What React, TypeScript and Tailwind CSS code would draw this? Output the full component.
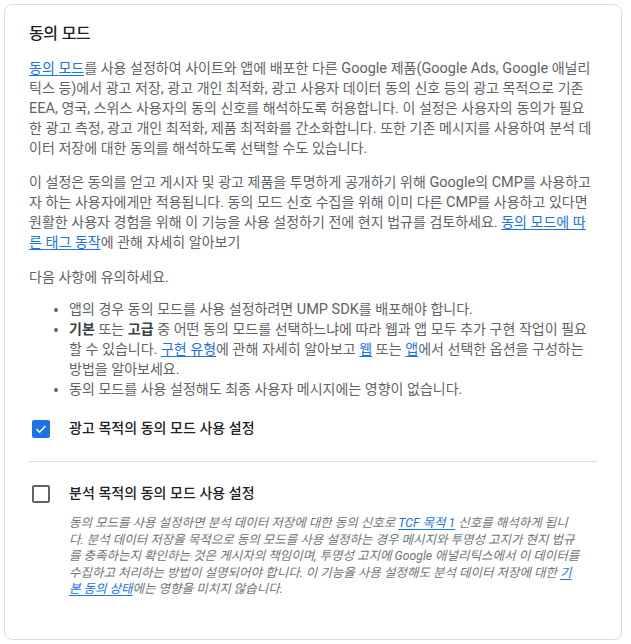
import React from "react";

const KB = "text-[14px] leading-none";
const KT = "text-[16px] tracking-[-0.5px] leading-none";
const KI = "text-[12.5px] leading-none";

function K({ t, k }: { t: string; k: string }) {
  const parts = t.split(/([\u1100-\u11FF\u3130-\u318F\uAC00-\uD7AF]+)/);
  return (
    <>
      {parts.map((p, i) =>
        i % 2 === 1 ? (
          <span key={i} className={k}>
            {p}
          </span>
        ) : (
          <React.Fragment key={i}>{p}</React.Fragment>
        )
      )}
    </>
  );
}

function A({ t, k }: { t: string; k: string }) {
  return (
    <a href="#" className="text-[#1a73e8] underline underline-offset-2">
      <K t={t} k={k} />
    </a>
  );
}

function CheckOn() {
  return (
    <span className="flex h-[18px] w-[18px] shrink-0 items-center justify-center rounded-[2px] bg-[#1a73e8]">
      <svg width="14" height="14" viewBox="0 0 24 24" fill="none">
        <path d="M4.5 12.5l5 5L19.5 7" stroke="white" strokeWidth="2.6" />
      </svg>
    </span>
  );
}

function CheckOff() {
  return <span className="block h-[18px] w-[18px] shrink-0 rounded-[2px] border-2 border-[#5f6368] bg-white" />;
}

export default function App() {
  return (
    <div className="bg-white min-h-[644px] pt-1 pl-1 font-['Roboto','Noto_Sans_CJK_KR',sans-serif]">
      <div className="h-[636px] w-[618px] rounded-lg border border-[#dadce0] bg-white px-6 pt-[16px]">
        <h2 className="mb-[14px] text-[17px] leading-6 font-medium text-[#202124]">
          <K t="동의 모드" k={KT} />
        </h2>
        <div className="text-[14.5px] leading-[20px] text-[#5f6368]">
          <p className="mb-[14px]">
            <A t="동의 모드" k={KB} />
            <K
              t="를 사용 설정하여 사이트와 앱에 배포한 다른 Google 제품(Google Ads, Google 애널리틱스 등)에서 광고 저장, 광고 개인 최적화, 광고 사용자 데이터 동의 신호 등의 광고 목적으로 기존 EEA, 영국, 스위스 사용자의 동의 신호를 해석하도록 허용합니다. 이 설정은 사용자의 동의가 필요한 광고 측정, 광고 개인 최적화, 제품 최적화를 간소화합니다. 또한 기존 메시지를 사용하여 분석 데이터 저장에 대한 동의를 해석하도록 선택할 수도 있습니다."
              k={KB}
            />
          </p>
          <p className="mb-[15px]">
            <K
              t="이 설정은 동의를 얻고 게시자 및 광고 제품을 투명하게 공개하기 위해 Google의 CMP를 사용하고자 하는 사용자에게만 적용됩니다. 동의 모드 신호 수집을 위해 이미 다른 CMP를 사용하고 있다면 원활한 사용자 경험을 위해 이 기능을 사용 설정하기 전에 현지 법규를 검토하세요. "
              k={KB}
            />
            <A t="동의 모드에 따른 태그 동작" k={KB} />
            <K t="에 관해 자세히 알아보기" k={KB} />
          </p>
          <p className="mb-[12px]">
            <K t="다음 사항에 유의하세요." k={KB} />
          </p>
          <ul className="list-disc pl-10">
            <li>
              <K t="앱의 경우 동의 모드를 사용 설정하려면 UMP SDK를 배포해야 합니다." k={KB} />
            </li>
            <li>
              <b className="font-bold text-[#3c4043]">
                <K t="기본" k={KB} />
              </b>
              <K t=" 또는 " k={KB} />
              <b className="font-bold text-[#3c4043]">
                <K t="고급" k={KB} />
              </b>
              <K
                t=" 중 어떤 동의 모드를 선택하느냐에 따라 웹과 앱 모두 추가 구현 작업이 필요할 수 있습니다. "
                k={KB}
              />
              <A t="구현 유형" k={KB} />
              <K t="에 관해 자세히 알아보고 " k={KB} />
              <A t="웹" k={KB} />
              <K t=" 또는 " k={KB} />
              <A t="앱" k={KB} />
              <K t="에서 선택한 옵션을 구성하는 방법을 알아보세요." k={KB} />
            </li>
            <li>
              <K t="동의 모드를 사용 설정해도 최종 사용자 메시지에는 영향이 없습니다." k={KB} />
            </li>
          </ul>

          <div className="mt-[19px] flex h-5 items-center gap-[19px] pl-[3px]">
            <CheckOn />
            <span className="font-medium text-[#202124]">
              <K t="광고 목적의 동의 모드 사용 설정" k={KB} />
            </span>
          </div>

          <div className="mt-[22px] h-px bg-[#dadce0]" />

          <div className="mt-[22px] flex h-5 items-center gap-[19px] pl-[3px]">
            <CheckOff />
            <span className="font-medium text-[#202124]">
              <K t="분석 목적의 동의 모드 사용 설정" k={KB} />
            </span>
          </div>

          <p className="mt-[11px] pl-10 pr-4 text-[12.25px] leading-[16.5px] italic text-[#70757a]">
            <K
              t="동의 모드를 사용 설정하면 분석 데이터 저장에 대한 동의 신호로 "
              k={KI}
            />
            <A t="TCF 목적 1" k={KI} />
            <K
              t=" 신호를 해석하게 됩니다. 분석 데이터 저장을 목적으로 동의 모드를 사용 설정하는 경우 메시지와 투명성 고지가 현지 법규를 충족하는지 확인하는 것은 게시자의 책임이며, 투명성 고지에 Google 애널리틱스에서 이 데이터를 수집하고 처리하는 방법이 설명되어야 합니다. 이 기능을 사용 설정해도 분석 데이터 저장에 대한 "
              k={KI}
            />
            <A t="기본 동의 상태" k={KI} />
            <K t="에는 영향을 미치지 않습니다." k={KI} />
          </p>
        </div>
      </div>
    </div>
  );
}
